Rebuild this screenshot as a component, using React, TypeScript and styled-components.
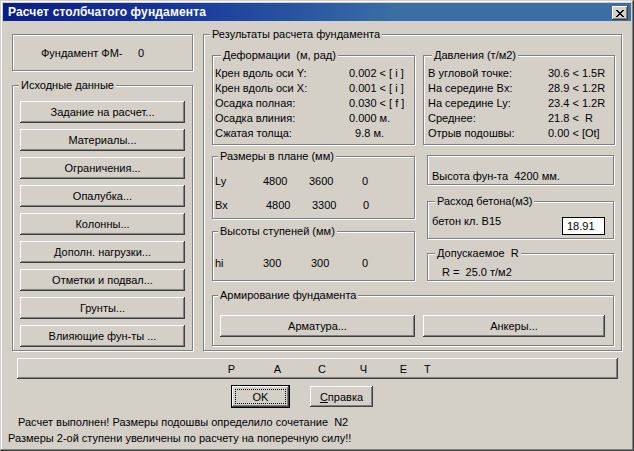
import styled, { createGlobalStyle } from "styled-components";

const GlobalStyle = createGlobalStyle`
  * { box-sizing: border-box; }
  html, body { margin: 0; padding: 0; background: #d4d0c8; }
  body {
    font-family: "Liberation Sans", Arial, sans-serif;
    font-size: 11px;
    color: #000;
  }
`;

const Window = styled.div`
  width: 634px;
  height: 451px;
  padding: 3px;
  background: #d4d0c8;
  box-shadow: inset -1px -1px #404040, inset 1px 1px #d4d0c8,
    inset -2px -2px #808080, inset 2px 2px #fff;
  overflow: hidden;
`;

const TitleBar = styled.div`
  height: 18px;
  display: flex;
  align-items: center;
  padding: 0 3px 0 5px;
  background: linear-gradient(90deg, #0a1e84 0%, #16349a 25%, #2a56a2 48%, #3a6ea5 62%, #3a6ea5 100%);
  color: #fff;
  font-weight: bold;
  font-size: 12px;
`;

const TitleText = styled.span`
  flex: 1;
  white-space: nowrap;
  letter-spacing: 0.15px;
`;

const Button = styled.button`
  font: inherit;
  color: #000;
  background: #d4d0c8;
  border: none;
  margin: 0;
  padding: 0;
  display: flex;
  align-items: center;
  justify-content: center;
  white-space: pre;
  box-shadow: inset -1px -1px #404040, inset 1px 1px #fff,
    inset -2px -2px #808080, inset 2px 2px #d4d0c8;
`;

const CloseButton = styled(Button)`
  width: 16px;
  height: 14px;
  margin-top: 2px;
`;

const Body = styled.div`
  padding: 7px 9px 0 9px;
`;

const Main = styled.div`
  display: flex;
  align-items: flex-start;
  gap: 10px;
`;

const LeftColumn = styled.div`
  width: 181px;
  display: flex;
  flex-direction: column;
  padding-top: 6px;
`;

const EtchedBox = styled.div<{ $h: number }>`
  height: ${(p) => p.$h}px;
  border: 1px solid #808080;
  box-shadow: inset 1px 1px #fff, 1px 1px #fff;
`;

const FundBox = styled(EtchedBox)`
  display: flex;
  align-items: center;
  padding-left: 28px;
`;

const FundLabel = styled.span`
  width: 97px;
`;

const Group = styled.fieldset<{ $w?: number; $h: number; $pad: string; $mt?: number }>`
  margin: ${(p) => p.$mt ?? 0}px 0 0 0;
  min-width: 0;
  width: ${(p) => (p.$w ? `${p.$w}px` : "auto")};
  height: ${(p) => p.$h}px;
  padding: ${(p) => p.$pad};
  border: 1px solid #808080;
  box-shadow: inset 1px 1px #fff, 1px 1px #fff;
`;

const Legend = styled.legend<{ $ml?: number }>`
  margin-left: ${(p) => p.$ml ?? 0}px;
  padding: 0 2px;
  line-height: 13px;
  background: #d4d0c8;
  white-space: pre;
`;

const ButtonStack = styled.div`
  display: flex;
  flex-direction: column;
  gap: 6px;
`;

const SideButton = styled(Button)`
  height: 22px;
`;

const RowA = styled.div`
  display: flex;
  gap: 8px;
`;

const DataRow = styled.div`
  display: flex;
  height: 15px;
  line-height: 15px;
  white-space: pre;
`;

const DataLabel = styled.span<{ $w: number }>`
  width: ${(p) => p.$w}px;
  flex: none;
`;

const RowB = styled.div`
  display: flex;
  margin-top: 5px;
`;

const Column = styled.div<{ $w: number; $ml?: number }>`
  width: ${(p) => p.$w}px;
  margin-left: ${(p) => p.$ml ?? 0}px;
  display: flex;
  flex-direction: column;
`;

const DimRow = styled.div`
  display: grid;
  grid-template-columns: 48px 46px 53px auto;
  height: 24px;
  align-items: center;
`;

const DimValue = styled.span<{ $shift?: number }>`
  padding-left: ${(p) => p.$shift ?? 0}px;
`;

const HeightBox = styled(EtchedBox)`
  margin-top: 5px;
  display: flex;
  align-items: flex-end;
  padding: 0 0 2px 4px;
  white-space: pre;
`;

const ConcreteRow = styled.div`
  display: flex;
  align-items: flex-start;
`;

const ValueField = styled.div`
  margin: 2px 0 0 auto;
  width: 43px;
  height: 18px;
  background: #fff;
  border: 1px solid #000;
  padding-left: 4px;
  line-height: 16px;
`;

const PlainText = styled.div`
  white-space: pre;
  line-height: 13px;
`;

const ArmRow = styled.div`
  display: flex;
  gap: 8px;
`;

const ArmButton = styled(Button)<{ $w: number }>`
  width: ${(p) => p.$w}px;
  height: 22px;
`;

const CalcButton = styled(Button)`
  margin: 7px 0 0 5px;
  width: 601px;
  height: 21px;
  justify-content: flex-start;
  padding-left: 191px;
`;

const CalcLetters = styled.span`
  display: grid;
  grid-template-columns: 47px 45px 44px 39px 41px auto;
`;

const DialogButtons = styled.div`
  display: flex;
  align-items: flex-start;
  margin-top: 6px;
  padding-left: 219px;
`;

const DefaultButton = styled(Button)`
  width: 59px;
  height: 23px;
  border: 1px solid #000;
  padding: 3px;
  align-items: stretch;
`;

const FocusRect = styled.span`
  flex: 1;
  border: 1px dotted #000;
  display: flex;
  align-items: center;
  justify-content: center;
`;

const HelpButton = styled(Button)`
  width: 63px;
  height: 21px;
  margin: 1px 0 0 20px;
`;

const StatusBlock = styled.div`
  margin: 6px 0 0 -4px;
`;

const StatusLine = styled.div<{ $indent: number }>`
  line-height: 16px;
  padding-left: ${(p) => p.$indent}px;
  white-space: pre;
`;

const setupButtons = [
  "Задание на расчет...",
  "Материалы...",
  "Ограничения...",
  "Опалубка...",
  "Колонны...",
  "Дополн. нагрузки...",
  "Отметки и подвал...",
  "Грунты...",
  "Влияющие фун-ты ...",
];

const deformations = [
  ["Крен вдоль оси Y:", "0.002 < [ i ]"],
  ["Крен вдоль оси X:", "0.001 < [ i ]"],
  ["Осадка полная:", "0.030 < [ f ]"],
  ["Осадка влиния:", "0.000 м."],
  ["Сжатая толща:", "  9.8 м."],
];

const pressures = [
  ["В угловой точке:", "30.6 < 1.5R"],
  ["На середине Bx:", "28.9 < 1.2R"],
  ["На середине Ly:", "23.4 < 1.2R"],
  ["Среднее:", "21.8 <  R"],
  ["Отрыв подошвы:", "0.00 < [Ot]"],
];

const calcLetters = ["Р", "А", "С", "Ч", "Е", "Т"];

function CloseIcon() {
  return (
    <svg width="8" height="7" viewBox="0 0 8 7" shapeRendering="crispEdges">
      <path
        d="M0 0h2v1h1v1h2V1h1V0h2v1H7v1H6v1H5v1h1v1h1v1h1v1H6V6H5V5H3v1H2v1H0V6h1V5h1V4h1V3H2V2H1V1H0z"
        fill="#000"
      />
    </svg>
  );
}

export default function App() {
  return (
    <>
      <GlobalStyle />
      <Window>
        <TitleBar>
          <TitleText>Расчет столбчатого фундамента</TitleText>
          <CloseButton>
            <CloseIcon />
          </CloseButton>
        </TitleBar>
        <Body>
          <Main>
            <LeftColumn>
              <FundBox $h={37}>
                <FundLabel>Фундамент ФМ-</FundLabel>
                <span>0</span>
              </FundBox>
              <Group $h={272} $pad="9px 7px 0 7px" $mt={8}>
                <Legend $ml={-1}>Исходные данные</Legend>
                <ButtonStack>
                  {setupButtons.map((b) => (
                    <SideButton key={b}>{b}</SideButton>
                  ))}
                </ButtonStack>
              </Group>
            </LeftColumn>

            <Group $w={419} $h={323} $pad="8px 6px 0 8px">
              <Legend $ml={-2}>Результаты расчета фундамента</Legend>
              <RowA>
                <Group $w={203} $h={96} $pad="4px 0 0 2px">
                  <Legend $ml={6}>Деформации  (м, рад)</Legend>
                  {deformations.map(([l, v]) => (
                    <DataRow key={l}>
                      <DataLabel $w={134}>{l}</DataLabel>
                      <span>{v}</span>
                    </DataRow>
                  ))}
                </Group>
                <Group $w={192} $h={96} $pad="4px 0 0 4px">
                  <Legend $ml={4}>Давления (т/м2)</Legend>
                  {pressures.map(([l, v]) => (
                    <DataRow key={l}>
                      <DataLabel $w={120}>{l}</DataLabel>
                      <span>{v}</span>
                    </DataRow>
                  ))}
                </Group>
              </RowA>

              <RowB>
                <Column $w={203}>
                  <Group $h={69} $pad="6px 0 0 2px">
                    <Legend $ml={3}>Размеры в плане (мм)</Legend>
                    <DimRow>
                      <span>Ly</span>
                      <DimValue>4800</DimValue>
                      <DimValue>3600</DimValue>
                      <DimValue>0</DimValue>
                    </DimRow>
                    <DimRow>
                      <span>Bx</span>
                      <DimValue $shift={3}>4800</DimValue>
                      <DimValue $shift={3}>3300</DimValue>
                      <DimValue $shift={1}>0</DimValue>
                    </DimRow>
                  </Group>
                  <Group $h={56} $pad="13px 0 0 2px" $mt={6}>
                    <Legend $ml={3}>Высоты ступеней (мм)</Legend>
                    <DimRow>
                      <span>hi</span>
                      <DimValue $shift={-1}>300</DimValue>
                      <DimValue $shift={2}>300</DimValue>
                      <DimValue>0</DimValue>
                    </DimRow>
                  </Group>
                </Column>

                <Column $w={187} $ml={12}>
                  <HeightBox $h={30}>Высота фун-та  4200 мм.</HeightBox>
                  <Group $h={44} $pad="7px 8px 0 4px" $mt={10}>
                    <Legend $ml={3}>Расход бетона(м3)</Legend>
                    <ConcreteRow>
                      <PlainText>бетон кл. B15</PlainText>
                      <ValueField>18.91</ValueField>
                    </ConcreteRow>
                  </Group>
                  <Group $h={34} $pad="6px 0 0 14px" $mt={8}>
                    <Legend $ml={-7}>Допускаемое  R</Legend>
                    <PlainText>R =  25.0 т/м2</PlainText>
                  </Group>
                </Column>
              </RowB>

              <Group $h={57} $pad="13px 0 0 7px" $mt={8} $w={402}>
                <Legend $ml={-2}>Армирование фундамента</Legend>
                <ArmRow>
                  <ArmButton $w={195}>Арматура...</ArmButton>
                  <ArmButton $w={182}>Анкеры...</ArmButton>
                </ArmRow>
              </Group>
            </Group>
          </Main>

          <CalcButton>
            <CalcLetters>
              {calcLetters.map((c) => (
                <span key={c}>{c}</span>
              ))}
            </CalcLetters>
          </CalcButton>

          <DialogButtons>
            <DefaultButton>
              <FocusRect>OK</FocusRect>
            </DefaultButton>
            <HelpButton>
              <u>С</u>правка
            </HelpButton>
          </DialogButtons>

          <StatusBlock>
            <StatusLine $indent={10}>
              Расчет выполнен! Размеры подошвы определило сочетание  N2
            </StatusLine>
            <StatusLine $indent={0}>
              Размеры 2-ой ступени увеличены по расчету на поперечную силу!!
            </StatusLine>
          </StatusBlock>
        </Body>
      </Window>
    </>
  );
}
